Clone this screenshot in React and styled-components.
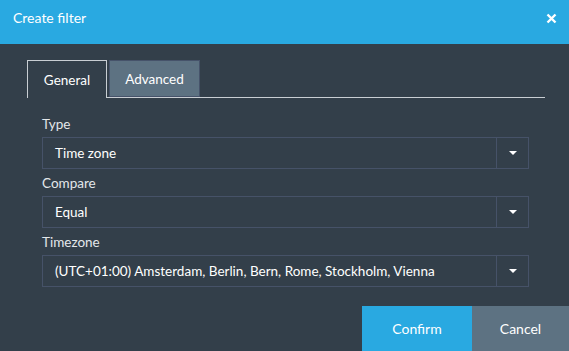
import React, { useState } from "react";
import styled, { createGlobalStyle } from "styled-components";

const Global = createGlobalStyle`
  html, body { margin: 0; padding: 0; }
  body {
    background: #333f4a;
    font-family: Lato, "Open Sans", sans-serif;
    color: #fff;
  }
`;

const Dialog = styled.div`
  width: 569px;
  height: 351px;
  background: #333f4a;
  display: flex;
  flex-direction: column;
`;

const Header = styled.div`
  height: 44px;
  box-sizing: border-box;
  background: #29a9e1;
  display: flex;
  justify-content: space-between;
  align-items: flex-start;
  padding: 9px 10px 0 13px;
`;

const Title = styled.div`
  font-size: 14px;
  line-height: 17px;
`;

const Close = styled.button`
  background: none;
  border: 0;
  padding: 0;
  margin-top: 4px;
  width: 13px;
  height: 13px;
  cursor: pointer;
  display: flex;
`;

const Body = styled.div`
  flex: 1;
  padding: 16px 24px 0 27px;
  display: flex;
  flex-direction: column;
`;

const Tabs = styled.div`
  display: flex;
  gap: 2px;
  height: 37px;
  border-bottom: 1px solid #c9ced3;
`;

const Tab = styled.button`
  font-family: inherit;
  font-size: 13.5px;
  color: #fff;
  padding: 0;
  box-sizing: border-box;
  width: ${(p) => p.$w}px;
  height: ${(p) => (p.$active ? 38 : 37)}px;
  background: ${(p) => (p.$active ? "#333f4a" : "#5d7282")};
  border: ${(p) => (p.$active ? "1px solid #c9ced3" : "1px solid #46536a")};
  border-bottom: ${(p) => (p.$active ? "0" : "1px solid #46536a")};
  cursor: pointer;
`;

const Form = styled.div`
  padding: 17px 16px 0 15px;
  display: flex;
  flex-direction: column;
`;

const Field = styled.div`
  display: flex;
  flex-direction: column;
  gap: 4px;
  & + & {
    margin-top: 5px;
  }
`;

const Label = styled.label`
  font-size: 13.5px;
  line-height: 18px;
  color: #e3e7ea;
`;

const Select = styled.div`
  height: 32px;
  box-sizing: border-box;
  border: 1px solid #465268;
  display: flex;
  align-items: stretch;
`;

const Value = styled.div`
  flex: 1;
  font-size: 13.5px;
  display: flex;
  align-items: center;
  padding-left: 12px;
`;

const Arrow = styled.div`
  width: 31px;
  border-left: 1px solid #465268;
  display: flex;
  align-items: center;
  justify-content: center;
`;

const Footer = styled.div`
  margin-top: auto;
  display: flex;
  justify-content: flex-end;
`;

const Btn = styled.button`
  font-family: inherit;
  font-size: 14px;
  color: #fff;
  border: 0;
  height: 45px;
  width: ${(p) => p.$w}px;
  background: ${(p) => p.$bg};
  cursor: pointer;
`;

const Caret = () => (
  <svg width="8" height="4" viewBox="0 0 8 4">
    <path d="M0 0h8L4 4z" fill="#fff" />
  </svg>
);

const fields = [
  { label: "Type", value: "Time zone" },
  { label: "Compare", value: "Equal" },
  { label: "Timezone", value: "(UTC+01:00) Amsterdam, Berlin, Bern, Rome, Stockholm, Vienna" },
];

export default function App() {
  const [tab, setTab] = useState("general");
  return (
    <Dialog>
      <Global />
      <Header>
        <Title>Create filter</Title>
        <Close aria-label="Close">
          <svg width="11" height="11" viewBox="0 0 11 11">
            <path d="M1.5 1.5l8 8M9.5 1.5l-8 8" stroke="#fff" strokeWidth="2.4" />
          </svg>
        </Close>
      </Header>
      <Body>
        <Tabs>
          <Tab $w={80} $active={tab === "general"} onClick={() => setTab("general")}>General</Tab>
          <Tab $w={91} $active={tab === "advanced"} onClick={() => setTab("advanced")}>Advanced</Tab>
        </Tabs>
        <Form>
          {fields.map((f) => (
            <Field key={f.label}>
              <Label>{f.label}</Label>
              <Select>
                <Value>{f.value}</Value>
                <Arrow><Caret /></Arrow>
              </Select>
            </Field>
          ))}
        </Form>
      </Body>
      <Footer>
        <Btn $w={110} $bg="#29a9e1">Confirm</Btn>
        <Btn $w={97} $bg="#5d7282">Cancel</Btn>
      </Footer>
    </Dialog>
  );
}
